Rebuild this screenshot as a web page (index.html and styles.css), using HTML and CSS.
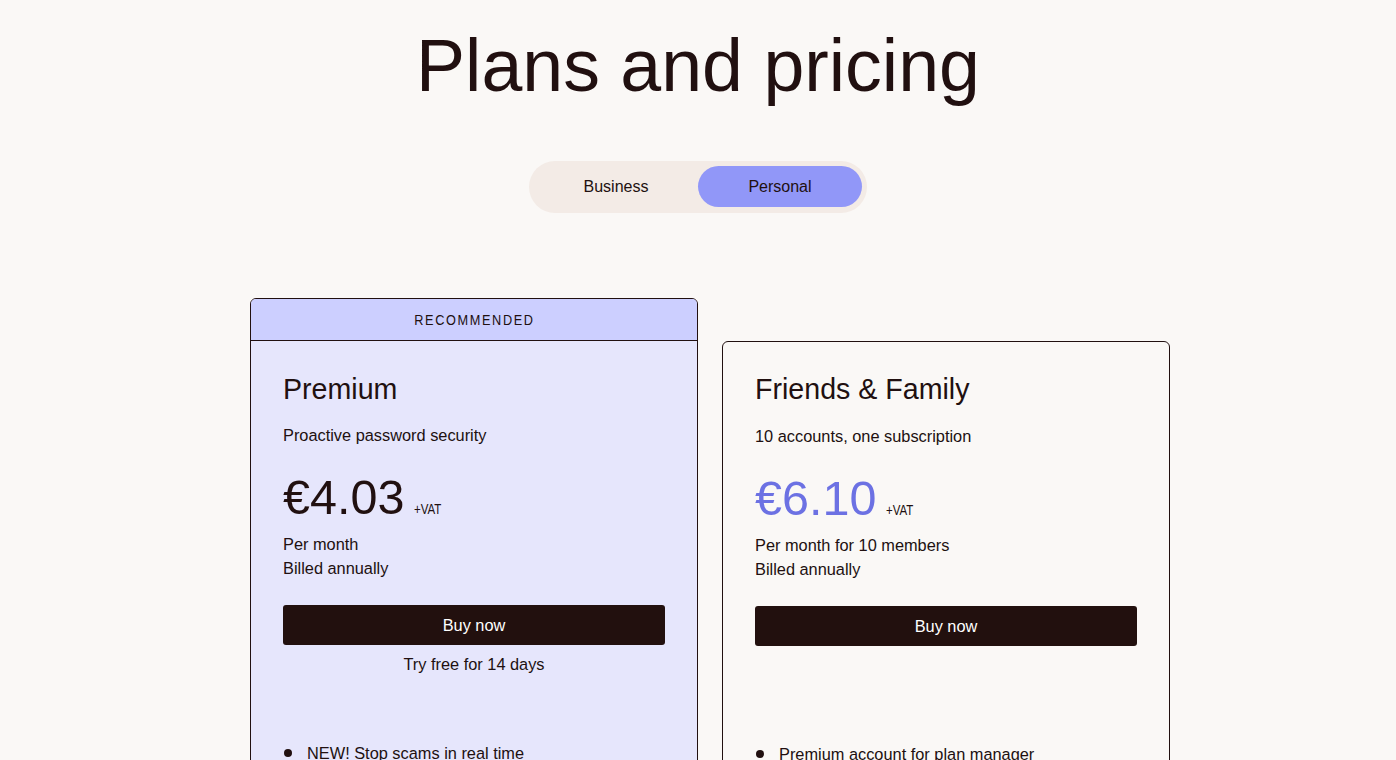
FILE: index.html
```html
<!DOCTYPE html>
<html lang="en">
<head>
  <meta charset="UTF-8">
  <meta name="viewport" content="width=device-width, initial-scale=1.0">
  <title>Plans and pricing</title>
  <link rel="stylesheet" href="styles.css">
</head>
<body>
  <h1 class="page-title">Plans and pricing</h1>

  <!-- Business / Personal switch -->
  <div class="toggle">
    <button class="toggle-btn">Business</button>
    <button class="toggle-btn active">Personal</button>
  </div>

  <div class="plans">
    <div class="plan featured">
      <div class="plan-badge"><span class="narrow">RECOMMENDED</span></div>
      <div class="plan-body">
        <h2 class="plan-name">Premium</h2>
        <p class="plan-desc">Proactive password security</p>
        <div class="price-row">
          <span class="price">€4.03</span>
          <span class="vat narrow">+VAT</span>
        </div>
        <p class="billing">Per month<br>Billed annually</p>
        <div class="cta">
          <button class="buy-btn">Buy now</button>
          <p class="trial">Try free for 14 days</p>
        </div>
        <ul class="features">
          <li>NEW! Stop scams in real time</li>
          <li>Password health and data breach alerts</li>
        </ul>
      </div>
    </div>

    <div class="plan">
      <div class="plan-body">
        <h2 class="plan-name">Friends &amp; Family</h2>
        <p class="plan-desc">10 accounts, one subscription</p>
        <div class="price-row">
          <span class="price accent">€6.10</span>
          <span class="vat narrow">+VAT</span>
        </div>
        <p class="billing">Per month for 10 members<br>Billed annually</p>
        <div class="cta">
          <button class="buy-btn">Buy now</button>
        </div>
        <ul class="features">
          <li>Premium account for plan manager</li>
          <li>9 additional Premium accounts</li>
        </ul>
      </div>
    </div>
  </div>
</body>
</html>
```

FILE: styles.css
```css
* {
  box-sizing: border-box;
  margin: 0;
  padding: 0;
}

body {
  font-family: "Liberation Sans", Arial, sans-serif;
  background-color: #faf8f6;
  color: #211010;
  display: flex;
  flex-direction: column;
  align-items: center;
}

.page-title {
  margin-top: 24px;
  font-size: 73.5px;
  font-weight: 400;
  line-height: 83px;
}

/* Toggle */
.toggle {
  margin-top: 54px;
  display: flex;
  padding: 5px 5px 6px;
  background-color: #f3ebe6;
  border-radius: 26px;
}

.toggle-btn {
  width: 164px;
  height: 41px;
  border: none;
  border-radius: 21px;
  background: transparent;
  font-family: inherit;
  font-size: 16px;
  color: #211010;
  cursor: pointer;
}

.toggle-btn.active {
  background-color: #9197f8;
}

/* Plans */
.plans {
  margin-top: 85px;
  width: 944px;
  padding-left: 24px;
  display: flex;
  align-items: flex-start;
  gap: 24px;
}

.plan {
  width: 448px;
  margin-top: 43px;
  border: 1px solid #211010;
  border-radius: 6px;
  background-color: #faf8f6;
  overflow: hidden;
}

.plan.featured {
  margin-top: 0;
  background-color: #e6e6fc;
}

/* narrow caption type */
.narrow {
  display: inline-block;
  transform: scaleX(0.82);
}

.plan-badge {
  background-color: #cccfff;
  border-bottom: 1px solid #211010;
  padding: 11px 0 10px;
  line-height: 20px;
  text-align: center;
  font-size: 15.5px;
  letter-spacing: 2px;
}

.plan-body {
  padding: 31px 32px 40px;
}

.featured .plan-body {
  padding-top: 32px;
}

.plan-name {
  font-size: 28.6px;
  font-weight: 400;
  line-height: 32px;
}

.plan-desc {
  margin-top: 19px;
  font-size: 16.35px;
  line-height: 24px;
}

.featured .plan-desc {
  margin-top: 18px;
}

.price-row {
  margin-top: 22px;
  display: flex;
  align-items: baseline;
  gap: 10px;
}

.price {
  font-size: 48.5px;
  line-height: 56px;
}

.price.accent {
  color: #6c71e3;
}

.vat {
  font-size: 14px;
  transform-origin: left center;
}

.billing {
  margin-top: 7px;
  font-size: 16.35px;
  line-height: 24px;
}

.cta {
  margin-top: 25px;
  height: 112px;
  text-align: center;
}

.buy-btn {
  width: 100%;
  height: 40px;
  border: none;
  border-radius: 3px;
  background-color: #22100e;
  color: #fff;
  font-family: inherit;
  font-size: 16.35px;
  cursor: pointer;
}

.trial {
  margin-top: 7px;
  font-size: 16.35px;
  line-height: 24px;
}

.features {
  margin-top: 24px;
  list-style: none;
}

.features li {
  display: flex;
  align-items: center;
  gap: 15px;
  font-size: 16.35px;
  line-height: 24px;
  margin-bottom: 16px;
}

.features li::before {
  content: "";
  width: 8px;
  height: 8px;
  margin-left: 1px;
  border-radius: 50%;
  background-color: #211010;
  flex-shrink: 0;
}
```
